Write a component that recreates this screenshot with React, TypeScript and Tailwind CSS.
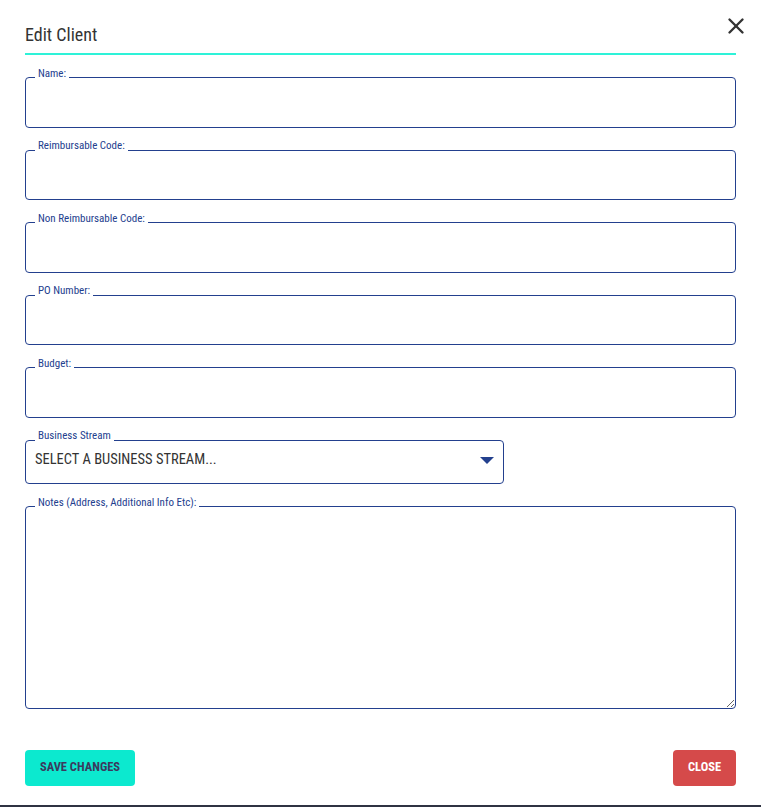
import { X } from 'lucide-react'

const font = { fontFamily: '"Roboto Condensed", "Liberation Sans Narrow", Roboto, sans-serif' }

function Field({ label }: { label: string }) {
  return (
    <fieldset className="h-[60px] w-full border border-[#23408e] rounded-[4px] px-[9px] pb-0 m-0 min-w-0">
      <legend className="px-[3px] text-[11px] leading-[12px] pb-[8px] text-[#23408e]">{label}</legend>
      <input className="w-full h-[30px] -mt-[8px] outline-none bg-transparent text-[14px] text-[#333]" />
    </fieldset>
  )
}

export default function App() {
  return (
    <div className="w-[761px] h-[807px] bg-white border-b-2 border-[#2f3342] flex flex-col px-[25px]" style={font}>
      <div className="flex items-start">
        <h2 className="flex-1 pt-[22px] pb-[5px] text-[18px] leading-[26px] text-[#333] border-b-2 border-[#2ef2d8]">
          Edit Client
        </h2>
        <button className="-ml-[13px] -mr-[13px] mt-[13px] text-[#333]" aria-label="Close">
          <X size={26} strokeWidth={2.2} />
        </button>
      </div>

      <div className="flex flex-col gap-[12.5px] mt-[12.5px]">
        <Field label="Name:" />
        <Field label="Reimbursable Code:" />
        <Field label="Non Reimbursable Code:" />
        <Field label="PO Number:" />
        <Field label="Budget:" />

        <fieldset className="h-[54px] w-[479px] border border-[#23408e] rounded-[4px] px-[9px] pb-0 m-0 min-w-0">
          <legend className="px-[3px] text-[11px] leading-[12px] pb-[8px] text-[#23408e]">Business Stream</legend>
          <div className="flex items-center justify-between h-[24px] -mt-[2px]">
            <span className="text-[14.5px] text-[#333]">SELECT A BUSINESS STREAM...</span>
            <svg width="14" height="7" viewBox="0 0 14 7">
              <path d="M0 0 H14 L7 7 Z" fill="#23408e" />
            </svg>
          </div>
        </fieldset>

        <fieldset className="h-[212px] w-full border border-[#23408e] rounded-[4px] px-[9px] pb-0 m-0 min-w-0 flex flex-col">
          <legend className="px-[3px] text-[11px] leading-[12px] pb-[8px] text-[#23408e]">
            Notes (Address, Additional Info Etc):
          </legend>
          <textarea className="w-[calc(100%+9px)] h-[199px] -mt-[8px] outline-none bg-transparent text-[14px] text-[#333]" />
        </fieldset>
      </div>

      <div className="flex justify-between mt-[41px]">
        <button className="h-[36px] w-[110px] rounded-[4px] bg-[#0ce9cf] text-[12.5px] font-bold text-[#3b3a5e]">
          SAVE CHANGES
        </button>
        <button className="h-[36px] w-[63px] rounded-[4px] bg-[#d54a4a] text-[12.5px] font-bold text-white">
          CLOSE
        </button>
      </div>
    </div>
  )
}
